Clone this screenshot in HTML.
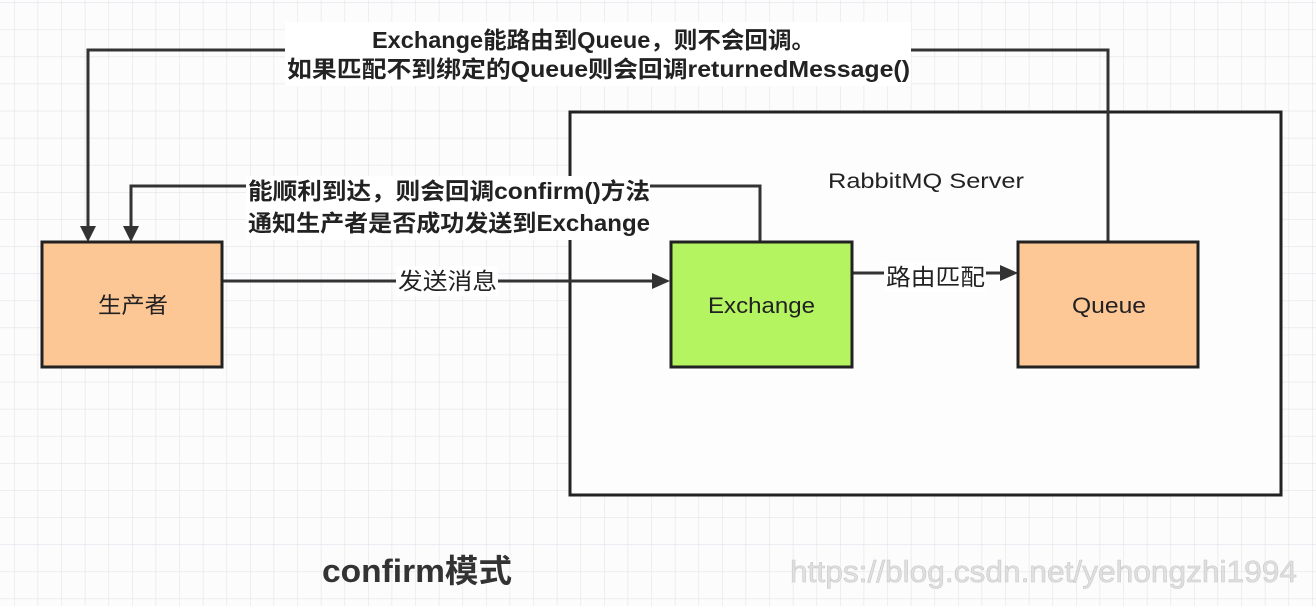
<!DOCTYPE html>
<html><head><meta charset="utf-8"><style>
body{margin:0;width:1316px;height:606px;overflow:hidden;background:#fcfcfd;}
svg{display:block}
text{font-family:"Liberation Sans","Noto Sans CJK SC",sans-serif;}
</style></head><body>
<svg width="1316" height="606" viewBox="0 0 1316 606">
<defs>
<pattern id="g" x="14" y="2.3" width="23.6" height="27.1" patternUnits="userSpaceOnUse">
<path d="M0 0V27.1M0 0H23.6" stroke="#e4e4e8" stroke-width="1.2" fill="none"/>
</pattern>
</defs>
<rect width="1316" height="606" fill="#fcfcfd"/>
<rect width="1316" height="606" fill="url(#g)"/>
<rect x="570" y="112" width="711" height="383" fill="#fdfdfd" stroke="#222" stroke-width="3"/>
<text x="828" y="188" font-size="21" fill="#222" textLength="196" lengthAdjust="spacingAndGlyphs">RabbitMQ Server</text>
<path d="M1108 241V50H88V228" stroke="#333" stroke-width="3" fill="none"/>
<path d="M80 226L88 242L96 226Z" fill="#333"/>
<rect x="285" y="22" width="626" height="64" fill="#fff"/>
<text x="372" y="48" font-size="23" font-weight="bold" fill="#222" textLength="443" lengthAdjust="spacingAndGlyphs">Exchange能路由到Queue，则不会回调。</text>
<text x="287" y="77" font-size="23" font-weight="bold" fill="#222" textLength="623" lengthAdjust="spacingAndGlyphs">如果匹配不到绑定的Queue则会回调returnedMessage()</text>
<path d="M760 241V186H131V228" stroke="#333" stroke-width="3" fill="none"/>
<path d="M123 226L131 242L139 226Z" fill="#333"/>
<rect x="246" y="176" width="404" height="64" fill="#fff"/>
<text x="248" y="199" font-size="23" font-weight="bold" fill="#222" textLength="402" lengthAdjust="spacingAndGlyphs">能顺利到达，则会回调confirm()方法</text>
<text x="248" y="231" font-size="23" font-weight="bold" fill="#222" textLength="402" lengthAdjust="spacingAndGlyphs">通知生产者是否成功发送到Exchange</text>
<path d="M222 281H656" stroke="#333" stroke-width="3"/>
<path d="M652 273L670 281L652 289Z" fill="#333"/>
<rect x="396" y="266" width="102" height="30" fill="#fff"/>
<text x="398" y="289" font-size="23" fill="#222" textLength="99" lengthAdjust="spacingAndGlyphs">发送消息</text>
<path d="M852 273H1004" stroke="#333" stroke-width="3"/>
<path d="M1000 265L1018 273L1000 281Z" fill="#333"/>
<rect x="884" y="262" width="102" height="30" fill="#fff"/>
<text x="886" y="285" font-size="23" fill="#222" textLength="99" lengthAdjust="spacingAndGlyphs">路由匹配</text>
<rect x="42" y="242" width="180" height="125" fill="#fcc794" stroke="#222" stroke-width="3"/>
<text x="98" y="313" font-size="22" fill="#222" textLength="70" lengthAdjust="spacingAndGlyphs">生产者</text>
<rect x="671" y="242" width="181" height="125" fill="#b3f460" stroke="#222" stroke-width="3"/>
<text x="708" y="313" font-size="22" fill="#222" textLength="107" lengthAdjust="spacingAndGlyphs">Exchange</text>
<rect x="1018" y="242" width="180" height="125" fill="#fdc796" stroke="#222" stroke-width="3"/>
<text x="1072" y="313" font-size="22" fill="#222" textLength="74" lengthAdjust="spacingAndGlyphs">Queue</text>
<text x="322" y="582" font-size="32" font-weight="bold" fill="#333" textLength="190" lengthAdjust="spacingAndGlyphs">confirm模式</text>
<text x="790" y="582" font-size="31" fill="#e0e0e0" stroke="#c8c8c8" stroke-width="0.6" textLength="507" lengthAdjust="spacingAndGlyphs">https://blog.csdn.net/yehongzhi1994</text>
</svg>
</body></html>
